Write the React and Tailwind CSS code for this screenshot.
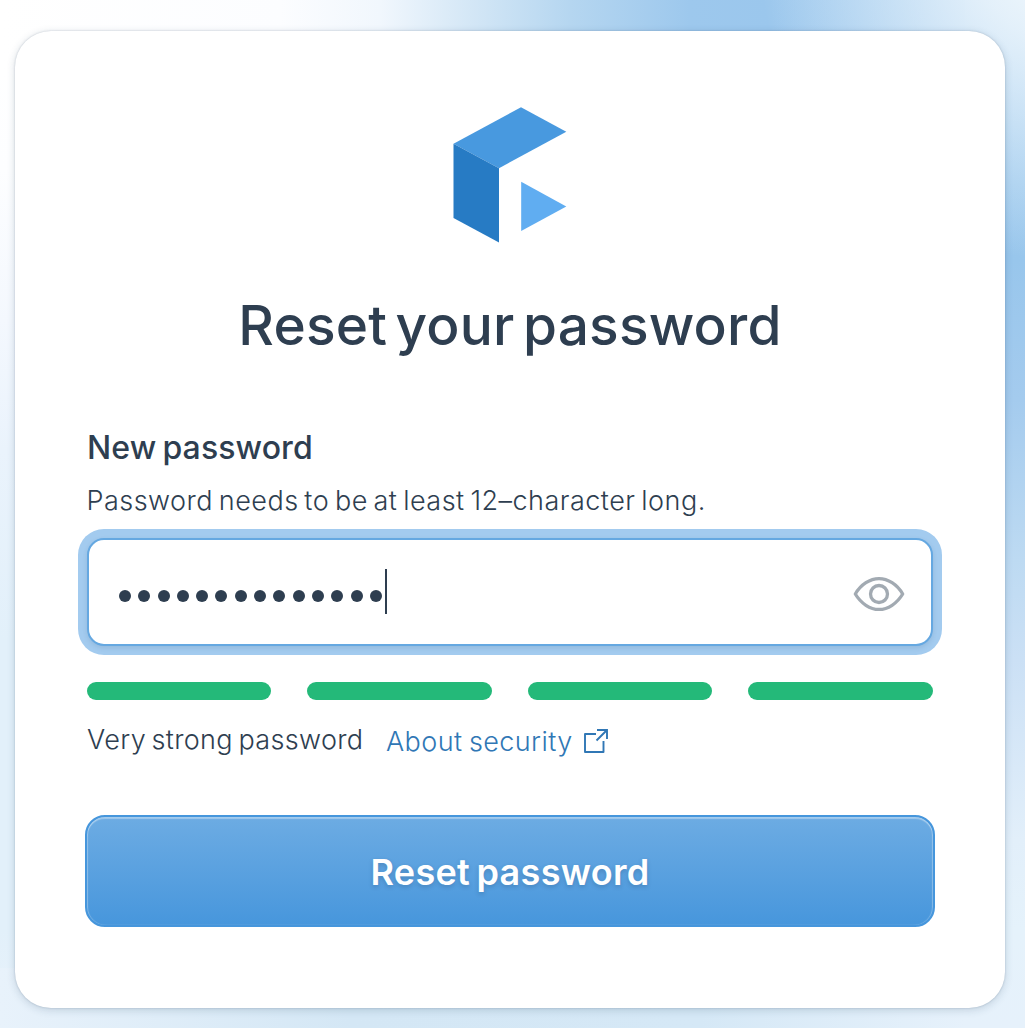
const DOTS = 14
const STRENGTH_STEPS = 4

function Logo() {
  return (
    <svg className="h-[136px] w-[114px]" viewBox="453 107 114 136" aria-hidden="true">
      <path d="M453.5 143.8 521 107.3 566.3 131.7 499 168.2Z" fill="#4899df" />
      <path d="M453.5 143.8 499 168.2V242.6L453.5 218Z" fill="#277bc4" />
      <path d="M521.2 181.8 566.3 206.4 521.2 231Z" fill="#60adf1" />
    </svg>
  )
}

function EyeIcon() {
  return (
    <svg className="h-9 w-[52px]" viewBox="0 0 52 36" fill="none" stroke="#a2aab2" strokeWidth="3.3" aria-hidden="true">
      <path d="M2.3 18C8 8.5 17 2.6 26 2.6S44 8.5 49.7 18C44 27.5 35 33.4 26 33.4S8 27.5 2.3 18Z" strokeLinejoin="round" />
      <circle cx="26" cy="18" r="8.5" />
    </svg>
  )
}

function ExternalIcon() {
  return (
    <svg className="h-6 w-6" viewBox="0 0 24 24" fill="none" stroke="#3077b5" strokeWidth="1.9" aria-hidden="true">
      <path d="M12 5H1V23H19.5V12" strokeLinejoin="round" />
      <path d="M13 1H23V10M23 1 12.5 11.5" />
    </svg>
  )
}

function PasswordField() {
  return (
    <div className="flex h-[108px] items-center justify-between rounded-[17px] border-2 border-[#65a8e1] bg-white pr-[26px] pl-[30px] shadow-[0_2px_5px_rgba(30,60,90,0.12),0_0_0_9px_#a3cbef]">
      <div className="flex items-center pb-[2px]">
        <div className="flex gap-[7.3px] pt-[10px]">
          {Array.from({ length: DOTS }, (_, i) => (
            <span key={i} className="size-3 rounded-full bg-[#2e3e50]" />
          ))}
        </div>
        <span className="ml-[3px] h-[45px] w-[2px] bg-[#2e3e50]" />
      </div>
      <button type="button" aria-label="Show password" className="pt-[3px]">
        <EyeIcon />
      </button>
    </div>
  )
}

export default function App() {
  return (
    <main className="h-[1028px] w-[1025px] bg-[radial-gradient(circle_at_1060px_-40px,#f3f9fd_0px,#f3f9fdcc_80px,#f3f9fd00_300px),linear-gradient(180deg,#a8cff0_0px,#9bc8ed_180px,#98c6ec_260px,#a4cbee_400px,#bddaf2_560px,#cbe0f5_660px,#e2effa_840px,#e5f2fb_930px,#e6f1fb_1028px),linear-gradient(90deg,#ffffff_0px,#fcfdff_280px,#f1f7fd_380px,#d4e7f6_470px,#b5d6f0_570px,#9dc8ed_690px,#9bc7ed_770px,#a8cff0_1025px),linear-gradient(90deg,#e8f2fb_0px,#d4e7f5_350px,#d5e8f6_700px,#e6f1fb_965px),linear-gradient(180deg,#ffffff_0px,#fdfeff_170px,#f4f8fe_320px,#eaf3fc_450px,#e2f0fa_640px,#e2f0fa_930px,#e8f2fb_1028px)] bg-[length:100%_100%,60px_100%,965px_80px,965px_60px,100%_100%] bg-[position:0_0,100%_0,0_0,0_100%,0_0] bg-no-repeat px-[15px] pt-[31px] pr-5 font-['Inter',sans-serif] text-[#2e3e50]">
      <section className="flex h-[977px] flex-col rounded-[36px] bg-white px-[72px] pt-[76px] shadow-[0_2px_8px_rgba(30,60,90,0.18),0_0_2px_rgba(30,60,90,0.25)]">
        <div className="flex justify-center">
          <Logo />
        </div>
        <h1 className="mt-[52px] text-center text-[55px] leading-[60px] font-medium tracking-[0.2px] [word-spacing:-6.5px] whitespace-nowrap">
          Reset your password
        </h1>

        <label className="mt-[73px] text-[32px] leading-10 font-medium tracking-[0.1px] [word-spacing:-2.5px]">
          New password
        </label>
        <p className="mt-[17px] -ml-[0.5px] text-[27px] leading-8 font-light tracking-[0.48px] [word-spacing:-2.3px] whitespace-nowrap">
          Password needs to be at least 12–character long.
        </p>
        <div className="mt-[21px]">
          <PasswordField />
        </div>

        <div className="mt-9 mr-[0.2px] -ml-[0.2px] grid grid-cols-4 gap-9">
          {Array.from({ length: STRENGTH_STEPS }, (_, i) => (
            <span key={i} className="h-[18px] rounded-full bg-[#24b979]" />
          ))}
        </div>

        <div className="mt-6 flex text-[27px] leading-8 font-light whitespace-nowrap">
          <span className="w-[299px] tracking-[0.35px] [word-spacing:-2.5px]">Very strong password</span>
          <a href="#" className="flex pt-[2px] text-[#3077b5]">
            <span className="w-[198px] tracking-[0.4px] [word-spacing:-1.5px]">About security</span>
            <span className="pt-[3px]">
              <ExternalIcon />
            </span>
          </a>
        </div>

        <button
          type="button"
          className="-mx-[2px] mt-[57px] h-28 rounded-[20px] border-2 border-[#4696dc] bg-linear-to-b from-[#6dace3] to-[#4696dc] bg-origin-border pt-[2px] text-[36px] font-semibold tracking-[0.3px] [word-spacing:-3px] text-white shadow-[inset_0_2px_1px_rgba(255,255,255,0.35),inset_1px_0_1px_rgba(255,255,255,0.3),inset_-1px_0_1px_rgba(255,255,255,0.3)] text-shadow-[0_2px_4px_rgba(30,60,90,0.25)]"
        >
          Reset password
        </button>
      </section>
    </main>
  )
}
